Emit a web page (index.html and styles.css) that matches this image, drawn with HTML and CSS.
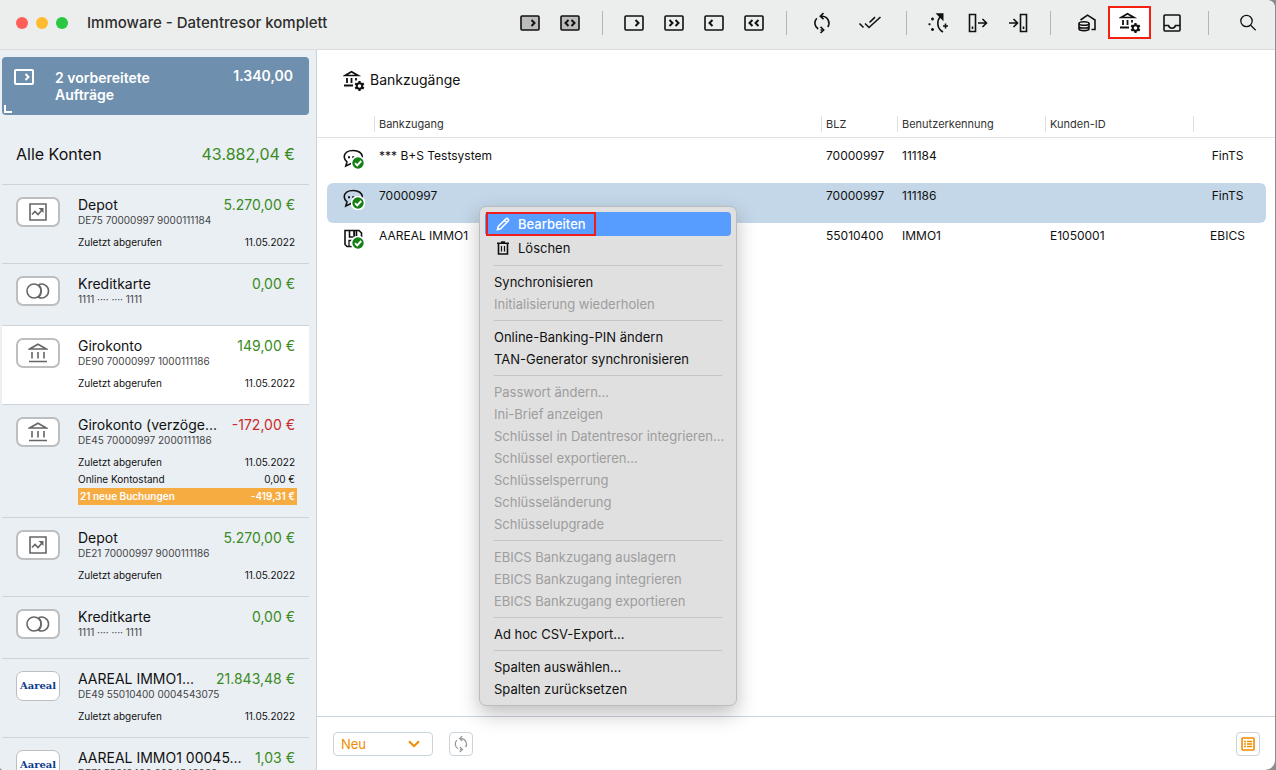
FILE: index.html
```html
<!DOCTYPE html>
<html lang="de">
<head>
    <meta charset="UTF-8">
    <meta name="viewport" content="width=device-width, initial-scale=1.0">
    <title>Immoware - Datentresor komplett</title>
    <link rel="stylesheet" href="styles.css">
</head>
<body>
    <!-- shared icons -->
    <svg class="icon-defs" aria-hidden="true">
        <symbol id="i-sync" viewBox="0 0 20 22">
            <path d="M4.800 6.200A7 7 0 0 0 6.200 17M9 4.200h1.500A7 7 0 0 1 15.800 15M8.500 18h2" />
            <path d="M11.500 1.200L8.300 4.200l3.200 3M8.500 14.800l3.200 3.200-3.200 3" />
        </symbol>
        <symbol id="i-bank" viewBox="0 0 20 20">
            <path d="M1.500 6L10 1.200 18.500 6z" />
            <path d="M4 9v6.500M10 9v6.500M16 9v6.500M1 18.500h18" />
        </symbol>
        <symbol id="i-depot" viewBox="0 0 18 18">
            <path d="M1 1h16v16H1z" />
            <path d="M3 11.500l3-3 3 3 4.500-5" />
            <path d="M9.500 5h5v5z" fill="currentColor" stroke="none" />
        </symbol>
        <symbol id="i-card" viewBox="0 0 24 16">
            <circle cx="8" cy="8" r="7" />
            <path d="M12.500 1.700A7 7 0 1 1 12.500 14.300A8.500 8.500 0 0 0 12.500 1.700" />
        </symbol>
        <symbol id="i-bankgear" viewBox="0 0 22 22">
            <path d="M2 5.500L8.500 1.800 15 5.500z" fill="none" stroke="currentColor" stroke-width="1.700" />
            <path d="M4 8v5M8.500 8v5M13 8v2.500M1 15.500h9" fill="none" stroke="currentColor" stroke-width="1.800" />
            <g fill="none" stroke="currentColor">
                <circle cx="16.500" cy="16" r="2.800" stroke-width="2" />
                <path d="M16.500 11v2M16.500 19v2M12.200 13.500l1.700 1M19.100 17.500l1.700 1M12.200 18.500l1.700-1M19.100 14.500l1.700-1" stroke-width="2.200" />
            </g>
        </symbol>
        <symbol id="i-ok" viewBox="0 0 14 14">
            <circle cx="7" cy="7" r="6.500" fill="#158015" stroke="#fff" />
            <path d="M4 7.200l2.200 2.200L10.200 5" fill="none" stroke="#fff" stroke-width="1.900" />
        </symbol>
        <symbol id="i-chat" viewBox="0 0 22 20">
            <path d="M4 12.800A7.500 6.800 0 0 1 1.200 8C1.200 4 5 1.500 10.200 1.500S19.300 4 19.300 8s-3.900 6.700-9.100 6.700c-.8 0-1.500 0-2.200-.1L2.800 17z" stroke-width="1.600" />
            <path d="M5 7.200h2v2H5zM9.200 7.200h2v2h-2zM13.400 7.200h2v2h-2z" fill="currentColor" stroke="none" />
        </symbol>
        <symbol id="i-disk" viewBox="0 0 22 20">
            <path d="M2 1.500h14l2.500 2.500v13.500H4l-2-2z" stroke-width="1.600" />
            <path d="M6.500 1.500v6.500h7V1.500" stroke-width="1.600" />
            <path d="M10.200 2h2v5h-2z" fill="currentColor" stroke="none" />
            <path d="M6 17v-5.500h8" stroke-width="1.300" />
        </symbol>
    </svg>

    <div class="window">
        <header class="toolbar">
            <span class="light light-red"></span>
            <span class="light light-yellow"></span>
            <span class="light light-green"></span>
            <h1>Immoware - Datentresor komplett</h1>

            <div class="tool-group">
                <button type="button" aria-label="Auftrag ausführen"><svg width="20" height="16" viewBox="0 0 20 16"><rect class="shade" x="1" y="1" width="18" height="14" rx="1" /><path class="thick" d="M11.500 5l3 3-3 3" /></svg></button>
                <button type="button" aria-label="Auftrag abgleichen"><svg width="20" height="16" viewBox="0 0 20 16"><rect class="shade" x="1" y="1" width="18" height="14" rx="1" /><path class="thick" d="M8.500 5l-3 3 3 3M11.500 5l3 3-3 3" /></svg></button>
            </div>
            <div class="tool-group">
                <button type="button" aria-label="Vorbereiten"><svg width="20" height="16" viewBox="0 0 20 16"><rect x="1" y="1" width="18" height="14" rx="1" /><path class="thick" d="M11.500 5l3 3-3 3" /></svg></button>
                <button type="button" aria-label="Alle vorbereiten"><svg width="20" height="16" viewBox="0 0 20 16"><rect x="1" y="1" width="18" height="14" rx="1" /><path class="thick" d="M5.500 5l3 3-3 3M11.500 5l3 3-3 3" /></svg></button>
                <button type="button" aria-label="Zurück"><svg width="20" height="16" viewBox="0 0 20 16"><rect x="1" y="1" width="18" height="14" rx="1" /><path class="thick" d="M8.500 5l-3 3 3 3" /></svg></button>
                <button type="button" aria-label="Alle zurück"><svg width="20" height="16" viewBox="0 0 20 16"><rect x="1" y="1" width="18" height="14" rx="1" /><path class="thick" d="M8.500 5l-3 3 3 3M14.500 5l-3 3 3 3" /></svg></button>
            </div>
            <div class="tool-group wide">
                <button type="button" aria-label="Aktualisieren"><svg width="20" height="22"><use href="#i-sync" /></svg></button>
                <button type="button" aria-label="Alle gelesen"><svg width="24" height="16" viewBox="0 0 24 16"><path d="M1.500 8.500l4 4M7 8.500l4 4L22.500 2M11.500 7.500L17 2.200" /></svg></button>
            </div>
            <div class="tool-group">
                <button type="button" aria-label="Automatisch zuordnen"><svg width="22" height="22" viewBox="0 0 22 22"><path d="M16 20C10 16.500 9 9 14 4" /><path d="M10.500 2h5.200v5.200z" fill="currentColor" /><path d="M18.500 11.500v5M16 14h5" /><path d="M5.500 5.500v3M4 7h3M5.500 16v3M4 17.500h3M2.500 11.200v2M1.500 12.200h2" stroke-width="1.400" /></svg></button>
                <button type="button" aria-label="Exportieren"><svg width="20" height="20" viewBox="0 0 20 20"><path d="M1.500 1.500h6v17h-6z" /><path d="M4.500 13.500v2.500M10 10h8M14.500 6l4 4-4 4" /></svg></button>
                <button type="button" aria-label="Importieren"><svg width="20" height="20" viewBox="0 0 20 20"><path d="M12.500 1.500h6v17h-6z" /><path d="M15.500 13.500v2.500M1 10h8M5.500 6l4 4-4 4" /></svg></button>
            </div>
            <div class="tool-group places">
                <button type="button" aria-label="Konten"><svg width="20" height="18" viewBox="0 0 20 18"><path d="M3.500 6L10.500 1.200 18 6v9.500h-3.500" /><ellipse cx="7" cy="9.500" rx="5" ry="1.800" /><path d="M2 9.500v5.200c0 1 2.200 1.900 5 1.900s5-.9 5-1.900V9.500M2 12.200c0 1 2.200 1.800 5 1.800s5-.8 5-1.800" /></svg></button>
                <button type="button" class="marked" aria-label="Bankzugänge"><svg width="22" height="22"><use href="#i-bankgear" /></svg></button>
                <button type="button" aria-label="Postfach"><svg width="18" height="18" viewBox="0 0 18 18"><rect x="1" y="1" width="16" height="16" rx="1" /><path d="M1 11.500h4.500c.5 1.700 1.800 2.700 3.500 2.700s3-1 3.500-2.700H17" /></svg></button>
            </div>
            <div class="tool-group search">
                <button type="button" aria-label="Suchen"><svg width="18" height="18" viewBox="0 0 18 18"><circle cx="7.500" cy="7" r="5.700" /><path d="M11.700 11.200l5 5" /></svg></button>
            </div>
        </header>

        <div class="content">
            <nav class="sidebar">
                <a href="#" class="orders">
                    <svg width="20" height="16" viewBox="0 0 20 16"><rect x="1" y="1" width="18" height="14" rx="1" /><path d="M11.500 5l3 3-3 3" /></svg>
                    <span class="orders-title">2 vorbereitete Aufträge</span>
                    <span class="orders-sum">1.340,00</span>
                </a>
                <a href="#" class="total">
                    <span>Alle Konten</span>
                    <span class="plus">43.882,04 €</span>
                </a>
                <a href="#" class="account">
                    <span class="badge"><svg width="18" height="18"><use href="#i-depot" /></svg></span>
                    <span class="info">
                        <span class="line name"><span>Depot</span><span class="plus">5.270,00 €</span></span>
                        <span class="iban">DE75 70000997 9000111184</span>
                        <span class="line detail"><span>Zuletzt abgerufen</span><span>11.05.2022</span></span>
                    </span>
                </a>
                <a href="#" class="account">
                    <span class="badge"><svg width="24" height="16"><use href="#i-card" /></svg></span>
                    <span class="info">
                        <span class="line name"><span>Kreditkarte</span><span class="plus">0,00 €</span></span>
                        <span class="iban">1111 ···· ···· 1111</span>
                    </span>
                </a>
                <a href="#" class="account active">
                    <span class="badge"><svg width="20" height="20"><use href="#i-bank" /></svg></span>
                    <span class="info">
                        <span class="line name"><span>Girokonto</span><span class="plus">149,00 €</span></span>
                        <span class="iban">DE90 70000997 1000111186</span>
                        <span class="line detail"><span>Zuletzt abgerufen</span><span>11.05.2022</span></span>
                    </span>
                </a>
                <a href="#" class="account">
                    <span class="badge"><svg width="20" height="20"><use href="#i-bank" /></svg></span>
                    <span class="info">
                        <span class="line name"><span>Girokonto (verzöge...</span><span class="minus">-172,00 €</span></span>
                        <span class="iban">DE45 70000997 2000111186</span>
                        <span class="line detail"><span>Zuletzt abgerufen</span><span>11.05.2022</span></span>
                        <span class="line detail"><span>Online Kontostand</span><span>0,00 €</span></span>
                        <span class="line detail new"><span>21 neue Buchungen</span><span>-419,31 €</span></span>
                    </span>
                </a>
                <a href="#" class="account">
                    <span class="badge"><svg width="18" height="18"><use href="#i-depot" /></svg></span>
                    <span class="info">
                        <span class="line name"><span>Depot</span><span class="plus">5.270,00 €</span></span>
                        <span class="iban">DE21 70000997 9000111186</span>
                        <span class="line detail"><span>Zuletzt abgerufen</span><span>11.05.2022</span></span>
                    </span>
                </a>
                <a href="#" class="account">
                    <span class="badge"><svg width="24" height="16"><use href="#i-card" /></svg></span>
                    <span class="info">
                        <span class="line name"><span>Kreditkarte</span><span class="plus">0,00 €</span></span>
                        <span class="iban">1111 ···· ···· 1111</span>
                    </span>
                </a>
                <a href="#" class="account">
                    <span class="badge aareal">Aareal</span>
                    <span class="info">
                        <span class="line name"><span>AAREAL IMMO1...</span><span class="plus">21.843,48 €</span></span>
                        <span class="iban">DE49 55010400 0004543075</span>
                        <span class="line detail"><span>Zuletzt abgerufen</span><span>11.05.2022</span></span>
                    </span>
                </a>
                <a href="#" class="account">
                    <span class="badge aareal">Aareal</span>
                    <span class="info">
                        <span class="line name"><span>AAREAL IMMO1 00045...</span><span class="plus">1,03 €</span></span>
                        <span class="iban">DE71 55010400 0004543083</span>
                    </span>
                </a>
            </nav>

            <main class="main">
                <div class="main-title">
                    <svg width="22" height="22"><use href="#i-bankgear" /></svg>
                    <h2>Bankzugänge</h2>
                </div>

                <table class="access-table">
                    <thead>
                        <tr>
                            <th class="col-icon"></th>
                            <th><span>Bankzugang</span></th>
                            <th class="col-blz"><span>BLZ</span></th>
                            <th class="col-user"><span>Benutzerkennung</span></th>
                            <th class="col-user"><span>Kunden-ID</span></th>
                            <th class="col-type"><span></span></th>
                        </tr>
                    </thead>
                    <tbody>
                        <tr>
                            <td><span class="state"><svg width="22" height="20"><use href="#i-chat" /></svg><svg class="ok" width="14" height="14"><use href="#i-ok" /></svg></span></td>
                            <td>*** B+S Testsystem</td>
                            <td>70000997</td>
                            <td>111184</td>
                            <td></td>
                            <td>FinTS</td>
                        </tr>
                        <tr class="selected">
                            <td><span class="state"><svg width="22" height="20"><use href="#i-chat" /></svg><svg class="ok" width="14" height="14"><use href="#i-ok" /></svg></span></td>
                            <td>70000997</td>
                            <td>70000997</td>
                            <td>111186</td>
                            <td></td>
                            <td>FinTS</td>
                        </tr>
                        <tr>
                            <td><span class="state"><svg width="22" height="20"><use href="#i-disk" /></svg><svg class="ok" width="14" height="14"><use href="#i-ok" /></svg></span></td>
                            <td>AAREAL IMMO1</td>
                            <td>55010400</td>
                            <td>IMMO1</td>
                            <td>E1050001</td>
                            <td>EBICS</td>
                        </tr>
                    </tbody>
                </table>

                <footer class="actions">
                    <div class="new-box">
                        <select aria-label="Neu">
                            <option>Neu</option>
                        </select>
                        <svg width="12" height="8" viewBox="0 0 12 8"><path d="M1 1.200l5 5 5-5" /></svg>
                    </div>
                    <button type="button" class="square" aria-label="Synchronisieren"><svg width="16" height="18"><use href="#i-sync" /></svg></button>
                    <button type="button" class="square orange" aria-label="Ansicht"><svg width="14" height="14" viewBox="0 0 14 14"><rect x="1" y="1" width="12" height="12" rx="1" /><path d="M3 4.500h2M6 4.500h5M3 7h2M6 7h5M3 9.500h2M6 9.500h5" stroke-width="1.300" /></svg></button>
                </footer>
            </main>
        </div>
    </div>

    <!-- context menu of the selected row -->
    <div class="menu" role="menu">
        <button type="button" role="menuitem" class="with-icon current">
            <span class="frame"><svg width="14" height="14" viewBox="0 0 14 14"><path d="M1.500 12.500l.8-3L9.800 2a1.500 1.500 0 0 1 2.200 2.200L4.500 11.700zM8.500 3.300l2.200 2.200" /></svg>Bearbeiten</span>
        </button>
        <button type="button" role="menuitem" class="with-icon"><svg width="14" height="14" viewBox="0 0 14 14"><path d="M1 2.200h12M5 1h4M2.500 2.200V13h9V2.200" /><path d="M5.500 5v5.500M8.500 5v5.500" stroke-width="1.200" /></svg>Löschen</button>
        <hr>
        <button type="button" role="menuitem">Synchronisieren</button>
        <button type="button" role="menuitem" disabled>Initialisierung wiederholen</button>
        <hr>
        <button type="button" role="menuitem">Online-Banking-PIN ändern</button>
        <button type="button" role="menuitem">TAN-Generator synchronisieren</button>
        <hr>
        <button type="button" role="menuitem" disabled>Passwort ändern...</button>
        <button type="button" role="menuitem" disabled>Ini-Brief anzeigen</button>
        <button type="button" role="menuitem" disabled>Schlüssel in Datentresor integrieren...</button>
        <button type="button" role="menuitem" disabled>Schlüssel exportieren...</button>
        <button type="button" role="menuitem" disabled>Schlüsselsperrung</button>
        <button type="button" role="menuitem" disabled>Schlüsseländerung</button>
        <button type="button" role="menuitem" disabled>Schlüsselupgrade</button>
        <hr>
        <button type="button" role="menuitem" disabled>EBICS Bankzugang auslagern</button>
        <button type="button" role="menuitem" disabled>EBICS Bankzugang integrieren</button>
        <button type="button" role="menuitem" disabled>EBICS Bankzugang exportieren</button>
        <hr>
        <button type="button" role="menuitem">Ad hoc CSV-Export...</button>
        <hr>
        <button type="button" role="menuitem">Spalten auswählen...</button>
        <button type="button" role="menuitem">Spalten zurücksetzen</button>
    </div>
</body>
</html>
```
FILE: styles.css
```css
* {
    box-sizing: border-box;
}
body {
    margin: 0;
    background-color: #8d8d8d;
    font-family: Inter, "Liberation Sans", sans-serif;
    font-size: 12px;
    color: #111;
}
button, select {
    font: inherit;
    color: inherit;
    margin: 0;
    padding: 0;
    border: none;
    background: none;
}
a {
    color: inherit;
    text-decoration: none;
}
h1, h2 {
    margin: 0;
}
svg {
    display: block;
    flex-shrink: 0;
    fill: none;
    stroke: currentColor;
    stroke-width: 1.6;
}
.icon-defs {
    position: absolute;
    width: 0;
    height: 0;
}
.window {
    display: flex;
    flex-direction: column;
    height: 100vh;
    margin-right: 1px;
    overflow: hidden;
    background-color: #fff;
    border-radius: 0 8px 10px 4px;
}

/* toolbar */
.toolbar {
    display: flex;
    align-items: center;
    flex-shrink: 0;
    height: 50px;
    padding: 0 7px 4px 16px;
    background-color: #eceeed;
    border-bottom: 1px solid #dcdcdc;
}
.light {
    width: 12px;
    height: 12px;
    margin-right: 8px;
    border-radius: 50%;
}
.light-red {
    background-color: #ff5f57;
}
.light-yellow {
    background-color: #febb2e;
}
.light-green {
    background-color: #28c840;
}
.toolbar h1 {
    flex: 1;
    margin-left: 11px;
    font-size: 15px;
    font-weight: 500;
    color: #2e2e2e;
    white-space: nowrap;
}
.tool-group {
    display: flex;
    align-items: center;
    padding: 0 12px 0 11px;
    height: 24px;
}
.tool-group + .tool-group {
    border-left: 1px solid #b5b5b5;
}
.tool-group button {
    display: flex;
    align-items: center;
    justify-content: center;
    width: 40px;
    height: 33px;
}
.tool-group .shade {
    fill: #bcbcbc;
}
.tool-group .thick {
    stroke-width: 2;
}
.wide button {
    width: 48px;
}
.tool-group.places {
    padding: 0 15px;
}
.places button {
    width: 42px;
}
.places .marked {
    width: 43px;
    border: 2px solid #f5200f;
    background-color: #fff;
}
.tool-group.search {
    padding: 0 0 0 19px;
}
.search svg {
    stroke-width: 1.3;
}

.content {
    display: flex;
    flex: 1;
    min-height: 0;
}

/* sidebar */
.sidebar {
    width: 317px;
    flex-shrink: 0;
    padding: 7px 7px 0 2px;
    overflow: hidden;
    background-color: #eaeff4;
    border-right: 1px solid #ccd3da;
}
.orders {
    position: relative;
    display: flex;
    height: 58px;
    padding: 12px 16px 0 12px;
    border-radius: 4px;
    background-color: #6e8fae;
    color: #fff;
    font-size: 14px;
    font-weight: 600;
    line-height: 17px;
}
.orders::after {
    content: "";
    position: absolute;
    left: 2px;
    bottom: 2px;
    width: 6px;
    height: 6px;
    border: solid #fff;
    border-width: 0 0 2px 2px;
}
.orders svg {
    stroke-width: 2;
}
.orders-title {
    flex: 1;
    margin-left: 21px;
    padding-right: 60px;
}
.orders-sum {
    line-height: 14px;
}
.total {
    display: flex;
    justify-content: space-between;
    align-items: center;
    height: 69px;
    padding: 8px 14px 0;
    font-size: 16px;
}
.plus {
    color: #3a8b22;
}
.minus {
    color: #cc2a2a;
}
.account {
    display: flex;
    gap: 18px;
    padding: 10px 14px 12px;
    border-top: 1px solid #ccd3da;
}
.account.active {
    background-color: #fff;
}
.badge {
    display: flex;
    align-items: center;
    justify-content: center;
    width: 44px;
    height: 30px;
    margin-top: 2px;
    border: 2px solid #bcbebf;
    border-radius: 7px;
    background-color: #fff;
    color: #666;
}
.aareal {
    border-width: 1px;
    font-family: "DejaVu Serif", serif;
    font-size: 10px;
    font-weight: bold;
    line-height: 12px;
    color: #0c3c8c;
}
.info {
    flex: 1;
    min-width: 0;
}
.line {
    display: flex;
    justify-content: space-between;
    white-space: nowrap;
}
.name {
    font-size: 14px;
    line-height: 20px;
}
.iban {
    display: block;
    margin-bottom: 8px;
    font-size: 10px;
    line-height: 11px;
    color: #444;
}
.detail {
    font-size: 10px;
    line-height: 17px;
}
.new {
    margin-right: -2px;
    padding: 0 2px;
    background-color: #f7ac42;
    color: #fff;
    font-weight: 600;
}

/* table of bank accesses */
.main {
    display: flex;
    flex-direction: column;
    flex: 1;
    min-width: 0;
}
.main-title {
    display: flex;
    align-items: center;
    gap: 5px;
    height: 66px;
    padding: 0 26px 4px;
}
.main-title h2 {
    padding-bottom: 3px;
    font-size: 14px;
    font-weight: 400;
}
.access-table {
    width: 100%;
    table-layout: fixed;
    border-collapse: separate;
    border-spacing: 0;
}
.access-table th {
    padding: 0 0 5px;
    border-bottom: 1px solid #dfe1e3;
    font-size: 11px;
    font-weight: 400;
    line-height: 16px;
    text-align: left;
    color: #333;
}
.access-table th span {
    display: block;
    height: 16px;
    padding-left: 4px;
    border-left: 1px solid #dfe1e3;
}
.access-table .col-icon {
    width: 57px;
}
.access-table .col-blz {
    width: 76px;
}
.access-table .col-user {
    width: 148px;
}
.access-table .col-type {
    width: 82px;
}
.access-table tbody::before {
    content: "";
    display: table-row;
    height: 5px;
}
.access-table td {
    height: 40px;
    padding: 5px 0 0 5px;
    line-height: 16px;
    vertical-align: top;
    background-clip: padding-box;
}
.access-table td:first-child {
    padding: 6px 0 0 16px;
    border-left: 10px solid transparent;
    border-radius: 16px 0 0 16px / 6px;
}
.access-table td:last-child {
    padding: 5px 4px 0 0;
    border-right: 9px solid transparent;
    border-radius: 0 15px 15px 0 / 6px;
    text-align: center;
}
.access-table .selected td {
    background-color: #c3d7e8;
}
.state {
    position: relative;
    display: block;
    width: 22px;
}
.state .ok {
    position: absolute;
    left: 8px;
    top: 7px;
}

/* footer */
.actions {
    display: flex;
    align-items: center;
    gap: 16px;
    height: 54px;
    margin-top: auto;
    padding: 0 15px 0 16px;
    border-top: 1px solid #cbd3db;
}
.new-box {
    position: relative;
    width: 100px;
    color: #f08a00;
}
.new-box select {
    appearance: none;
    display: block;
    width: 100%;
    height: 24px;
    padding: 0 7px;
    border: 1px solid #cbd3db;
    border-radius: 4px;
    font-size: 13px;
}
.new-box svg {
    position: absolute;
    right: 13px;
    top: 8px;
    stroke-width: 2;
    pointer-events: none;
}
.square {
    display: flex;
    align-items: center;
    justify-content: center;
    width: 24px;
    height: 24px;
    border: 1px solid #cbd3db;
    border-radius: 4px;
    color: #999;
}
.orange {
    margin-left: auto;
    color: #f08a00;
}

/* context menu */
.menu {
    position: absolute;
    left: 479px;
    top: 206px;
    width: 258px;
    padding: 5px;
    border: 1px solid #b9bdc1;
    border-radius: 7px;
    background-color: #e0e0e0;
    box-shadow: 0 8px 20px rgba(0,0,0,0.25);
}
.menu button {
    display: flex;
    align-items: center;
    width: 100%;
    height: 22px;
    padding: 0 9px;
    border-radius: 4px;
    font-size: 13px;
    white-space: nowrap;
}
.menu button:disabled {
    color: #9d9d9d;
}
.menu .with-icon {
    height: 24px;
    padding-left: 11px;
}
.menu .with-icon svg {
    margin-right: 8px;
}
.menu .current {
    padding-left: 1px;
    background-color: #579dff;
    color: #fff;
    font-weight: 500;
}
.frame {
    display: flex;
    align-items: center;
    height: 24px;
    padding: 0 8px;
    border: 2px solid #ee1c1c;
}
.menu hr {
    margin: 5px 9px;
    border: none;
    border-top: 1px solid #c4c4c4;
}
```
